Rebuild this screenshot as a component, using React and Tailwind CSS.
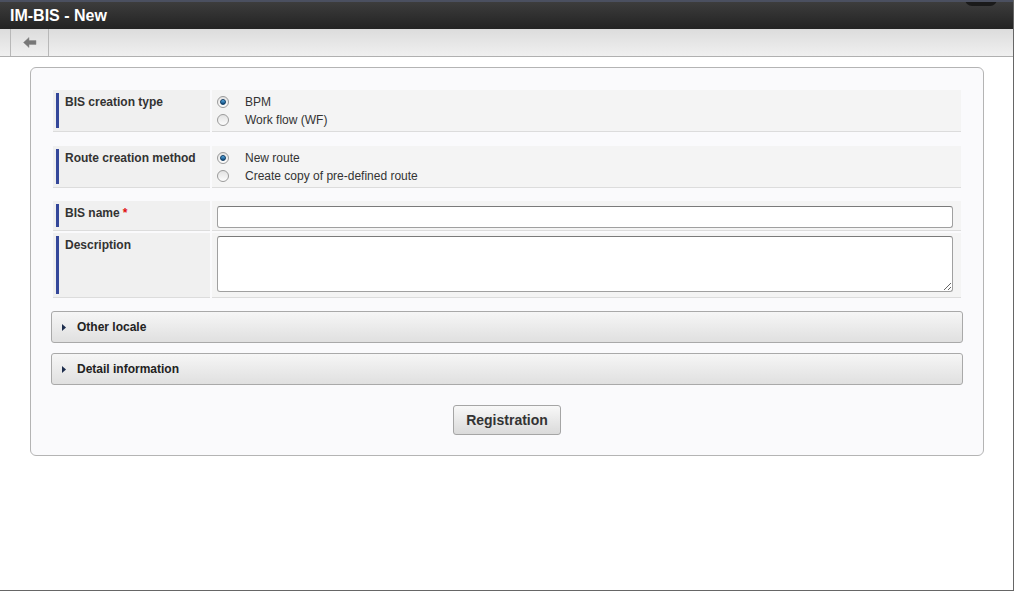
import React from 'react';

const font = { fontFamily: '"Liberation Sans", Arial, sans-serif' };

const Radio = ({ checked, label }) => (
    <label className="flex items-center h-[18px] text-[12px] text-[#333]">
        <span className="w-[12px] h-[12px] rounded-full border border-[#9a9a9a] bg-gradient-to-b from-[#e2e2e2] to-[#fdfdfd] flex items-center justify-center shrink-0">
            {checked && (
                <span className="w-[6px] h-[6px] rounded-full bg-gradient-to-b from-[#5cb0e8] to-[#0d4a7c] border border-[#0d3a62]"></span>
            )}
        </span>
        <span className="ml-[16px]">{label}</span>
    </label>
);

const Label = ({ children, required }) => (
    <div className="bg-[#f0f0f0] border-b border-[#dcdcdc] p-[3px]">
        <div className="h-full border-l-[3px] border-[#34479a] pl-[6px] pt-[2px] text-[12px] leading-[14px] font-bold text-[#333]">
            {children}
            {required && <span className="text-[#e01010] ml-[3px]">*</span>}
        </div>
    </div>
);

const Section = ({ label, options }) => (
    <div className="grid grid-cols-[157px_1fr] gap-x-[2px] mx-[2px]">
        <Label>{label}</Label>
        <div className="bg-[#f4f4f4] border-b border-[#dcdcdc] pl-[5px] pt-[3px] pb-[2px]">
            {options.map((o) => (
                <Radio key={o.label} checked={o.checked} label={o.label} />
            ))}
        </div>
    </div>
);

const Accordion = ({ title }) => (
    <div className="h-[32px] border border-[#a9a9a9] rounded-[3px] bg-gradient-to-b from-[#f6f6f6] to-[#e0e0e0] flex items-center pl-[10px]">
        <svg width="4" height="7" viewBox="0 0 4 7" className="shrink-0">
            <path d="M0 0 L4 3.5 L0 7 Z" fill="#1d2d4d" />
        </svg>
        <span className="ml-[11px] text-[12px] font-bold text-[#222]">{title}</span>
    </div>
);

const App = () => {
    return (
        <div style={font} className="w-[1015px] h-[592px] bg-white overflow-hidden">
            <div className="w-[1014px] h-[591px] border-r border-b border-[#666] flex flex-col">
                {/* Header */}
                <div className="relative h-[29px] shrink-0 border-t-2 border-[#4b5060] bg-gradient-to-b from-[#3d3d3d] to-[#232323] flex items-center pl-[10px] overflow-hidden">
                    <span className="text-white text-[16px] font-bold">IM-BIS - New</span>
                    <span className="absolute right-[16px] -top-[10px] w-[32px] h-[14px] rounded-full bg-[#1a1a1a]"></span>
                </div>

                {/* Toolbar */}
                <div className="h-[28px] shrink-0 bg-gradient-to-b from-[#dcdcdc] to-[#f0f0f0] border-b border-[#b0b0b0] flex">
                    <div className="w-[11px] border-r border-[#b8b8b8]"></div>
                    <button className="w-[38px] border-r border-[#b8b8b8] flex items-center justify-center">
                        <svg width="14" height="11" viewBox="0 0 14 11">
                            <path d="M0.5 5.5 L6 0.5 L6 3.5 L13 3.5 L13 7.5 L6 7.5 L6 10.5 Z" fill="#777" stroke="#8a8a8a" strokeWidth="0.5" />
                        </svg>
                    </button>
                </div>

                {/* Body */}
                <div className="flex-1 pl-[30px] pr-[29px] pt-[10px]">
                    <div className="border border-[#b4b4b4] rounded-[6px] bg-[#fafafc] px-[20px] pt-[22px] pb-[20px]">
                        <Section
                            label="BIS creation type"
                            options={[
                                { label: 'BPM', checked: true },
                                { label: 'Work flow (WF)', checked: false },
                            ]}
                        />
                        <div className="h-[14px]"></div>
                        <Section
                            label="Route creation method"
                            options={[
                                { label: 'New route', checked: true },
                                { label: 'Create copy of pre-defined route', checked: false },
                            ]}
                        />
                        <div className="h-[13px]"></div>

                        <div className="grid grid-cols-[157px_1fr] gap-x-[2px] gap-y-[2px] mx-[2px]">
                            <Label required>BIS name</Label>
                            <div className="bg-[#f4f4f4] border-b border-[#dcdcdc] pl-[5px] pr-[8px] pt-[3px] pb-[2px]">
                                <input
                                    type="text"
                                    className="w-full h-[22px] bg-white border border-[#a0a0a0] border-t-[#7a7a7a] rounded-[3px] outline-none px-[4px] text-[12px]"
                                />
                            </div>
                            <Label>Description</Label>
                            <div className="bg-[#f4f4f4] border-b border-[#dcdcdc] pl-[5px] pr-[8px] pt-[3px] pb-[5px]">
                                <textarea className="block w-full h-[56px] bg-white border border-[#a0a0a0] border-t-[#7a7a7a] rounded-[3px] outline-none px-[4px] text-[12px]"></textarea>
                            </div>
                        </div>

                        <div className="mt-[13px] flex flex-col gap-[10px]">
                            <Accordion title="Other locale" />
                            <Accordion title="Detail information" />
                        </div>

                        <div className="mt-[20px] flex justify-center">
                            <button className="w-[108px] h-[30px] border border-[#a5a5a5] rounded-[3px] bg-gradient-to-b from-[#f8f8f8] to-[#dadada] text-[14px] font-bold text-[#333]">
                                Registration
                            </button>
                        </div>
                    </div>
                </div>
            </div>
        </div>
    );
};

export default App;
